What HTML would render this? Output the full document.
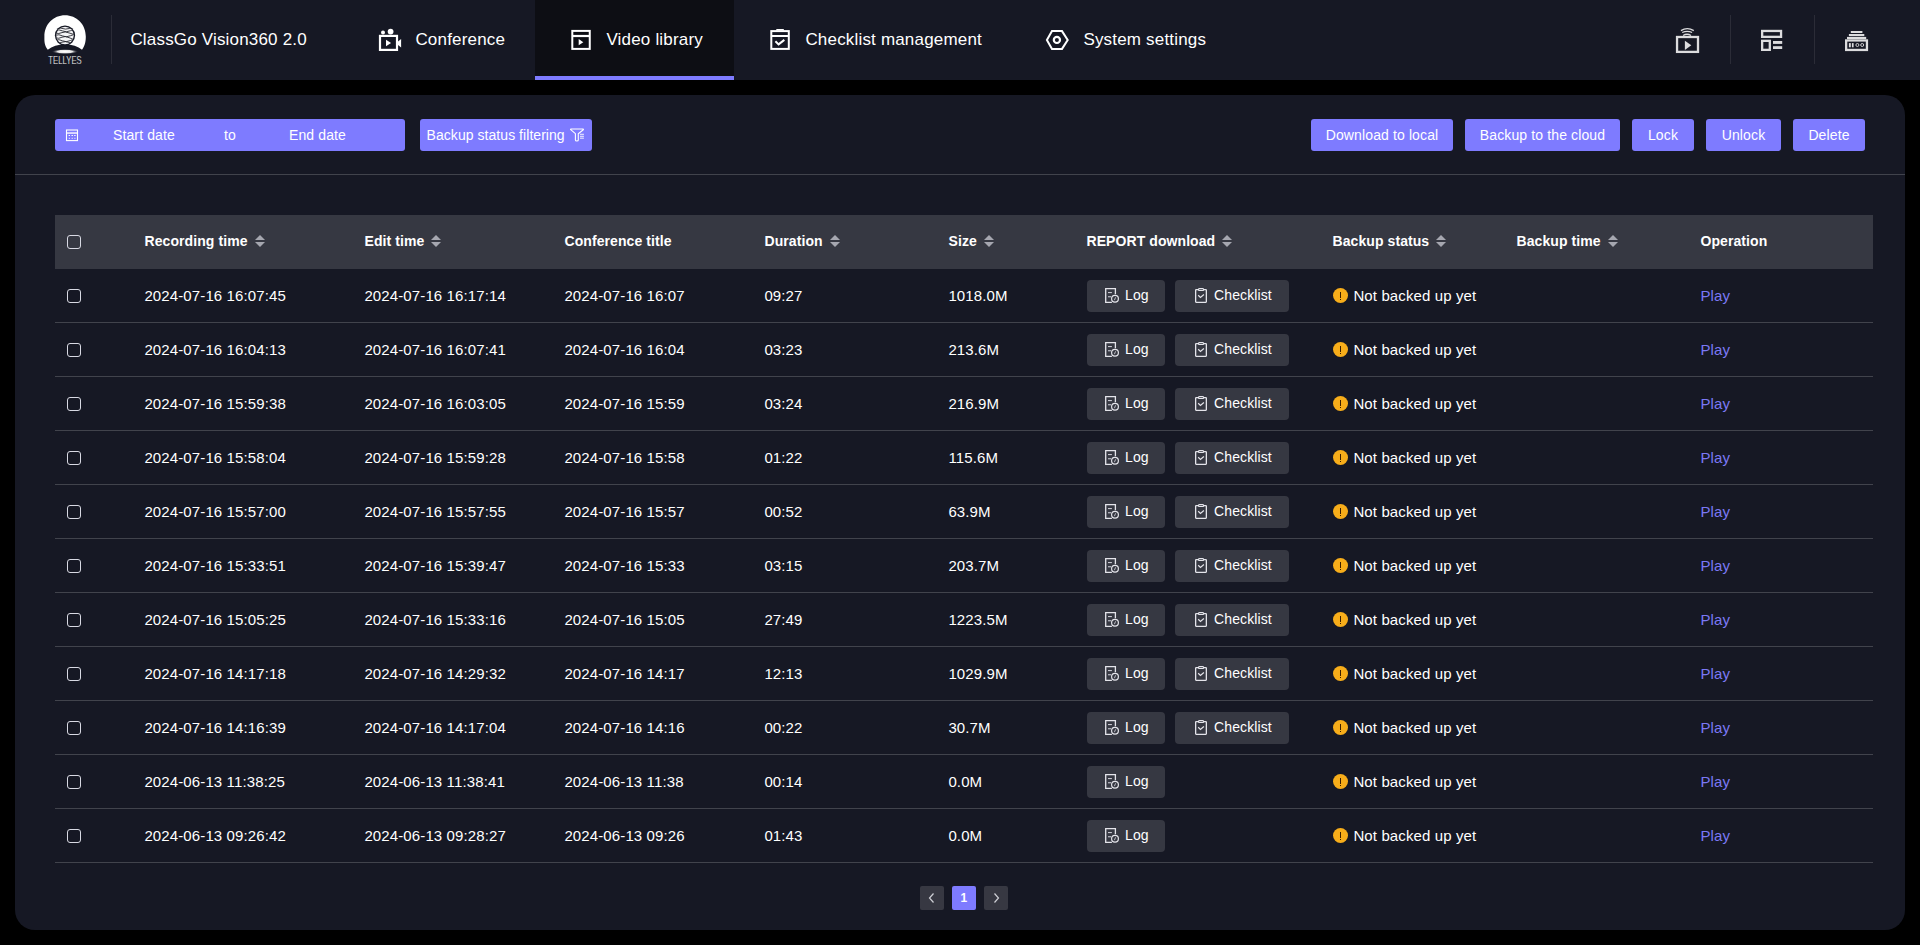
<!DOCTYPE html>
<html><head><meta charset="utf-8">
<style>
*{box-sizing:border-box;margin:0;padding:0}
html,body{width:1920px;height:945px;overflow:hidden;background:#000;font-family:"Liberation Sans",sans-serif;color:#fff;letter-spacing:0.12px}
.abs{position:absolute}
#hdr{position:absolute;left:0;top:0;width:1920px;height:80px;background:#161824}
.navt{position:absolute;top:1px;height:80px;line-height:78px;font-size:17px;color:#fff;white-space:nowrap;letter-spacing:0.18px;margin-left:-0.6px}
.vsep{position:absolute;width:1px;background:#2b2c37}
#panel{position:absolute;left:15px;top:95px;width:1890px;height:835px;background:#161824;border-radius:20px}
.btn{position:absolute;top:119px;height:32px;background:#7e7bff;border-radius:3px;font-size:14px;line-height:32px;color:#fff;text-align:center;white-space:nowrap}
#divider{position:absolute;left:15px;top:174px;width:1890px;height:1px;background:#41434c}
#thead{position:absolute;left:55px;top:215px;width:1818px;height:54px;background:#363842}
.th{position:absolute;top:215px;margin-left:-0.5px;letter-spacing:0.08px;height:54px;line-height:53px;font-size:14px;font-weight:700;color:#fff;white-space:nowrap}
.sort{display:inline-block;vertical-align:middle;margin-left:7px;margin-top:-3px}
.row{position:absolute;left:55px;width:1818px;height:54px;border-bottom:1px solid #41434c}
.td{position:absolute;top:0;margin-left:-0.6px;height:53px;line-height:53px;font-size:15px;color:#fff;white-space:nowrap}
.cb{position:absolute;left:12px;width:14px;height:14px;border:1.3px solid #d8d9e3;border-radius:3px}
.sbtn{position:absolute;top:11px;height:32px;background:#363842;border-radius:4px;font-size:14px;line-height:30px;color:#fff;white-space:nowrap}
.sbtn svg{position:absolute;top:2px}
.dot{position:absolute;left:1278px;top:19px;width:15px;height:15px;border-radius:50%;background:#f7ad1a}
.dot:after{content:"";position:absolute;left:7px;top:3.5px;width:1.2px;height:6.5px;background:#3a1d00}
.dot:before{content:"";position:absolute;left:7px;top:11px;width:1.2px;height:1.2px;background:#3a1d00}
.play{color:#7b78f5}
.pg{position:absolute;top:886px;width:24px;height:24px;border-radius:2px;background:#373842;font-size:12px;font-weight:700;text-align:center;line-height:24px}
</style></head>
<body>
<div id="hdr">
  <!-- logo -->
  <svg class="abs" style="left:36px;top:10px" width="60" height="60" viewBox="0 0 60 60">
    <defs>
      <radialGradient id="glow" cx="50%" cy="50%" r="50%">
        <stop offset="0%" stop-color="#fff"/><stop offset="55%" stop-color="#e8e8e8"/><stop offset="100%" stop-color="#161824" stop-opacity="0"/>
      </radialGradient>
      <clipPath id="sph"><circle cx="29" cy="25.5" r="8.7"/></clipPath>
    </defs>
    <path d="M11.8 39.8 C8 35 8.4 30 8.4 26.5 C8.4 14 17.5 5.2 29 5.2 C40.5 5.2 49.8 14 49.8 26.5 C49.8 30 49.5 35 46 39.8 C42 36.4 36 34.6 29 34.6 C22 34.6 16 36.4 11.8 39.8 Z" fill="#fff"/>
    <circle cx="29" cy="25.5" r="10.1" fill="#161824"/>
    <circle cx="29" cy="25.5" r="8.7" fill="#f4f4f6"/>
    <g clip-path="url(#sph)" stroke="#1e1f27" stroke-width="0.85" fill="none">
      <path d="M19 18.2 q4 -1.2 7 0.2 t8 0 t6 -0.5"/>
      <path d="M19 20.6 q4 -1.6 7.5 0.3 t8 -0.2 t6 0.3"/>
      <path d="M19 23 q4 1.2 7 -0.4 t8 0.6 t6 -0.6"/>
      <path d="M19 25.4 q4 -1.5 7.5 0.5 t8 -0.2 t6 -0.4"/>
      <path d="M19 27.8 q4 1.2 7 -0.6 t8 0.8 t6 -0.3"/>
      <path d="M19 30.2 q4 -1.3 7.5 0.6 t8 -0.3 t6 0.2"/>
      <path d="M19 32.6 q4 1 7 -0.4 t8 0.5 t6 -0.3"/>
    </g>
    <ellipse cx="29" cy="41.6" rx="13.5" ry="2.6" fill="url(#glow)"/>
    <text x="29" y="53.5" font-family="Liberation Sans" font-size="10.3" fill="#f0f0f0" stroke="#161824" stroke-width="0.15" text-anchor="middle" textLength="33.5" lengthAdjust="spacingAndGlyphs">TELLYES</text>
  </svg>
  <div class="vsep" style="left:111px;top:15px;height:49px"></div>
  <div class="navt" style="left:131px">ClassGo Vision360 2.0</div>

  <!-- Conference -->
  <svg class="abs" style="left:372px;top:24px" width="36" height="32" viewBox="0 0 36 32" fill="#fff">
    <circle cx="11" cy="8.5" r="2"/><circle cx="18.6" cy="7.6" r="2.9"/>
    <rect x="8" y="11.9" width="17" height="14" fill="none" stroke="#fff" stroke-width="2.2"/>
    <polygon points="14,15.7 19.1,19 14,22.2"/>
    <polygon points="26,17.5 29.1,14.9 29.1,23.4 26,21"/>
  </svg>
  <div class="navt" style="left:416px">Conference</div>

  <!-- Video library active -->
  <div class="abs" style="left:535px;top:0;width:199px;height:80px;background:#0d0e14"></div>
  <div class="abs" style="left:535px;top:76px;width:199px;height:4px;background:#7e7bff"></div>
  <svg class="abs" style="left:564px;top:24px" width="34" height="32" viewBox="0 0 34 32" fill="#fff">
    <rect x="8.3" y="6.9" width="17.45" height="18" fill="none" stroke="#fff" stroke-width="2"/>
    <rect x="8.3" y="10.9" width="17.45" height="2.2"/>
    <polygon points="14.7,15.1 19.3,18.15 14.7,21.2"/>
  </svg>
  <div class="navt" style="left:607px">Video library</div>

  <!-- Checklist management -->
  <svg class="abs" style="left:762px;top:24px" width="34" height="32" viewBox="0 0 34 32" fill="#fff">
    <rect x="9.3" y="7.1" width="17.5" height="17.8" fill="none" stroke="#fff" stroke-width="2"/>
    <polygon points="13.9,6.5 14.5,5.1 21.6,5.1 22.2,6.5"/>
    <rect x="9.3" y="11" width="17.5" height="2"/>
    <polyline points="13.4,17.3 16.6,20.4 22.35,15.9" fill="none" stroke="#fff" stroke-width="2"/>
  </svg>
  <div class="navt" style="left:806px">Checklist management</div>

  <!-- System settings -->
  <svg class="abs" style="left:1040px;top:24px" width="34" height="32" viewBox="0 0 34 32">
    <polygon points="6.9,16 12,7.1 22,7.1 27.7,16 22,24.9 12,24.9" fill="none" stroke="#fff" stroke-width="2"/>
    <circle cx="16.9" cy="15.9" r="3.1" fill="none" stroke="#fff" stroke-width="2.2"/>
  </svg>
  <div class="navt" style="left:1084px">System settings</div>

  <!-- right icons -->
  <svg class="abs" style="left:1670px;top:22px" width="36" height="36" viewBox="0 0 36 36" fill="#dcdcde">
    <rect x="7.05" y="15" width="20.95" height="14.9" fill="none" stroke="#dcdcde" stroke-width="2.3"/>
    <polygon points="14.9,18.7 21.3,23.35 14.9,28"/>
    <path d="M10.9 8.6 Q17.35 4.8 23.8 8.6" fill="none" stroke="#dcdcde" stroke-width="1.3"/>
    <path d="M12.2 10.5 Q17.15 8.1 22.1 10.5" fill="none" stroke="#dcdcde" stroke-width="1.3"/>
    <path d="M13.1 13.5 Q17.05 11 21 13.5" fill="none" stroke="#dcdcde" stroke-width="1.3"/>
  </svg>
  <div class="vsep" style="left:1730px;top:15px;height:49px"></div>
  <svg class="abs" style="left:1754px;top:22px" width="36" height="36" viewBox="0 0 36 36" fill="#dcdcde">
    <rect x="8.15" y="8.95" width="18.9" height="5.9" fill="none" stroke="#dcdcde" stroke-width="2.3"/>
    <rect x="8.15" y="18.85" width="7.65" height="9" fill="none" stroke="#dcdcde" stroke-width="2.3"/>
    <rect x="19" y="19" width="9.2" height="2.9"/>
    <rect x="19" y="24.2" width="9.2" height="2.8"/>
  </svg>
  <div class="vsep" style="left:1814px;top:15px;height:49px"></div>
  <svg class="abs" style="left:1838px;top:22px" width="36" height="36" viewBox="0 0 36 36" fill="#dcdcde">
    <rect x="12.8" y="9" width="11.6" height="2"/>
    <rect x="10.9" y="12" width="15.4" height="2.1"/>
    <rect x="9" y="14.9" width="19.2" height="2.2"/>
    <rect x="8.15" y="18.45" width="20.8" height="9.5" fill="none" stroke="#dcdcde" stroke-width="2.3"/>
    <rect x="10.9" y="21.1" width="1.9" height="4.2"/>
    <rect x="13.9" y="21.1" width="1.7" height="4.2"/>
    <circle cx="19.4" cy="23" r="1.5" fill="none" stroke="#dcdcde" stroke-width="0.9"/>
    <circle cx="24.2" cy="23" r="1.5" fill="none" stroke="#dcdcde" stroke-width="0.9"/>
  </svg>
</div>

<div id="panel"></div>

<!-- toolbar -->
<div class="btn" style="left:55px;width:350px;text-align:left">
  <svg class="abs" style="left:1px;top:0" width="40" height="32" viewBox="0 0 40 32">
    <rect x="10.5" y="11" width="11" height="10.6" fill="none" stroke="#fff" stroke-width="1.1"/>
    <rect x="11" y="13.1" width="10" height="1.9" fill="#dcdaff"/>
    <g fill="#fff"><rect x="12.6" y="16" width="1.4" height="1"/><rect x="15.5" y="16" width="1.4" height="1"/><rect x="18.2" y="16" width="1.4" height="1"/>
    <rect x="12.8" y="18.8" width="1" height="1"/><rect x="15.7" y="18.8" width="1" height="1"/><rect x="18.4" y="18.8" width="1" height="1"/></g>
  </svg>
  <span class="abs" style="left:58px">Start date</span>
  <span class="abs" style="left:169px">to</span>
  <span class="abs" style="left:234px">End date</span>
</div>
<div class="btn" style="left:420px;width:172px;text-align:left">
  <span class="abs" style="left:6.6px;letter-spacing:0.05px">Backup status filtering</span>
  <svg class="abs" style="left:135px;top:0" width="40" height="32" viewBox="0 0 40 32">
    <g transform="translate(0 0.7)">
    <path d="M16 9.3 H28 Q28.8 9.4 28.3 10 L23.3 14 V20.3 Q23.3 21.3 21.85 21.3 Q20.4 21.3 20.4 20.3 V14 L15.7 10 Q15.2 9.4 16 9.3 Z" fill="none" stroke="#fff" stroke-width="1.1" stroke-linejoin="round"/>
    <g fill="#fff"><rect x="25" y="14.1" width="3.9" height="0.9"/><rect x="25" y="16.1" width="3.9" height="0.9"/><rect x="25" y="18" width="3.9" height="0.9"/></g>
    </g>
  </svg>
</div>

<div class="btn" style="left:1311px;width:142px">Download to local</div>
<div class="btn" style="left:1465px;width:155px">Backup to the cloud</div>
<div class="btn" style="left:1632px;width:62px">Lock</div>
<div class="btn" style="left:1706px;width:75px">Unlock</div>
<div class="btn" style="left:1793px;width:72px">Delete</div>

<div id="divider"></div>

<!-- table header -->
<div id="thead"></div>
<div class="abs" style="left:67px;top:235px;width:14px;height:14px;border:1.3px solid #d8d9e3;border-radius:3px"></div>
<div class="th" style="left:145px">Recording time<svg class="sort" width="10" height="12" viewBox="0 0 10 12"><polygon points="5,0 10,5 0,5" fill="#a6a7b0"/><polygon points="0,7 10,7 5,12" fill="#a6a7b0"/></svg></div>
<div class="th" style="left:365px">Edit time<svg class="sort" width="10" height="12" viewBox="0 0 10 12"><polygon points="5,0 10,5 0,5" fill="#a6a7b0"/><polygon points="0,7 10,7 5,12" fill="#a6a7b0"/></svg></div>
<div class="th" style="left:565px">Conference title</div>
<div class="th" style="left:765px">Duration<svg class="sort" width="10" height="12" viewBox="0 0 10 12"><polygon points="5,0 10,5 0,5" fill="#a6a7b0"/><polygon points="0,7 10,7 5,12" fill="#a6a7b0"/></svg></div>
<div class="th" style="left:949px">Size<svg class="sort" width="10" height="12" viewBox="0 0 10 12"><polygon points="5,0 10,5 0,5" fill="#a6a7b0"/><polygon points="0,7 10,7 5,12" fill="#a6a7b0"/></svg></div>
<div class="th" style="left:1087px">REPORT download<svg class="sort" width="10" height="12" viewBox="0 0 10 12"><polygon points="5,0 10,5 0,5" fill="#a6a7b0"/><polygon points="0,7 10,7 5,12" fill="#a6a7b0"/></svg></div>
<div class="th" style="left:1333px">Backup status<svg class="sort" width="10" height="12" viewBox="0 0 10 12"><polygon points="5,0 10,5 0,5" fill="#a6a7b0"/><polygon points="0,7 10,7 5,12" fill="#a6a7b0"/></svg></div>
<div class="th" style="left:1517px">Backup time<svg class="sort" width="10" height="12" viewBox="0 0 10 12"><polygon points="5,0 10,5 0,5" fill="#a6a7b0"/><polygon points="0,7 10,7 5,12" fill="#a6a7b0"/></svg></div>
<div class="th" style="left:1701px">Operation</div>

<div id="rows"><div class="row" style="top:269px"><div class="cb" style="top:20px"></div><div class="td" style="left:90px">2024-07-16 16:07:45</div><div class="td" style="left:310px">2024-07-16 16:17:14</div><div class="td" style="left:510px">2024-07-16 16:07</div><div class="td" style="left:710px">09:27</div><div class="td" style="left:894px">1018.0M</div><div class="sbtn" style="left:1032px;width:78px"><svg style="left:11px" width="30" height="32" viewBox="0 0 30 32"><path d="M13.9 20.3 H7.7 V6.6 H17.4 V12.2" fill="none" stroke="#e4e4ea" stroke-width="1.3"/><rect x="10" y="10" width="3.9" height="1.1" fill="#c8c8d0"/><rect x="10" y="14.2" width="3" height="1.1" fill="#c8c8d0"/><circle cx="17" cy="16.75" r="3.4" fill="none" stroke="#e4e4ea" stroke-width="1.2"/><path d="M16.4 18.2 L17.6 15.3" stroke="#c8c8d0" stroke-width="0.9"/></svg><span class="abs" style="left:38px">Log</span></div><div class="sbtn" style="left:1120px;width:114px"><svg style="left:13px" width="30" height="32" viewBox="0 0 30 32"><rect x="7.65" y="7.7" width="10.7" height="12.65" rx="0.5" fill="none" stroke="#e4e4ea" stroke-width="1.3"/><rect x="10.4" y="6.6" width="5.3" height="1.9" rx="0.95" fill="#363842" stroke="#e4e4ea" stroke-width="1.2"/><polyline points="10.2,13.3 12.45,15.5 15.9,12.5" fill="none" stroke="#e4e4ea" stroke-width="1.2"/></svg><span class="abs" style="left:39px">Checklist</span></div><div class="dot"></div><div class="td" style="left:1299px">Not backed up yet</div><div class="td play" style="left:1646px">Play</div></div>
<div class="row" style="top:323px"><div class="cb" style="top:20px"></div><div class="td" style="left:90px">2024-07-16 16:04:13</div><div class="td" style="left:310px">2024-07-16 16:07:41</div><div class="td" style="left:510px">2024-07-16 16:04</div><div class="td" style="left:710px">03:23</div><div class="td" style="left:894px">213.6M</div><div class="sbtn" style="left:1032px;width:78px"><svg style="left:11px" width="30" height="32" viewBox="0 0 30 32"><path d="M13.9 20.3 H7.7 V6.6 H17.4 V12.2" fill="none" stroke="#e4e4ea" stroke-width="1.3"/><rect x="10" y="10" width="3.9" height="1.1" fill="#c8c8d0"/><rect x="10" y="14.2" width="3" height="1.1" fill="#c8c8d0"/><circle cx="17" cy="16.75" r="3.4" fill="none" stroke="#e4e4ea" stroke-width="1.2"/><path d="M16.4 18.2 L17.6 15.3" stroke="#c8c8d0" stroke-width="0.9"/></svg><span class="abs" style="left:38px">Log</span></div><div class="sbtn" style="left:1120px;width:114px"><svg style="left:13px" width="30" height="32" viewBox="0 0 30 32"><rect x="7.65" y="7.7" width="10.7" height="12.65" rx="0.5" fill="none" stroke="#e4e4ea" stroke-width="1.3"/><rect x="10.4" y="6.6" width="5.3" height="1.9" rx="0.95" fill="#363842" stroke="#e4e4ea" stroke-width="1.2"/><polyline points="10.2,13.3 12.45,15.5 15.9,12.5" fill="none" stroke="#e4e4ea" stroke-width="1.2"/></svg><span class="abs" style="left:39px">Checklist</span></div><div class="dot"></div><div class="td" style="left:1299px">Not backed up yet</div><div class="td play" style="left:1646px">Play</div></div>
<div class="row" style="top:377px"><div class="cb" style="top:20px"></div><div class="td" style="left:90px">2024-07-16 15:59:38</div><div class="td" style="left:310px">2024-07-16 16:03:05</div><div class="td" style="left:510px">2024-07-16 15:59</div><div class="td" style="left:710px">03:24</div><div class="td" style="left:894px">216.9M</div><div class="sbtn" style="left:1032px;width:78px"><svg style="left:11px" width="30" height="32" viewBox="0 0 30 32"><path d="M13.9 20.3 H7.7 V6.6 H17.4 V12.2" fill="none" stroke="#e4e4ea" stroke-width="1.3"/><rect x="10" y="10" width="3.9" height="1.1" fill="#c8c8d0"/><rect x="10" y="14.2" width="3" height="1.1" fill="#c8c8d0"/><circle cx="17" cy="16.75" r="3.4" fill="none" stroke="#e4e4ea" stroke-width="1.2"/><path d="M16.4 18.2 L17.6 15.3" stroke="#c8c8d0" stroke-width="0.9"/></svg><span class="abs" style="left:38px">Log</span></div><div class="sbtn" style="left:1120px;width:114px"><svg style="left:13px" width="30" height="32" viewBox="0 0 30 32"><rect x="7.65" y="7.7" width="10.7" height="12.65" rx="0.5" fill="none" stroke="#e4e4ea" stroke-width="1.3"/><rect x="10.4" y="6.6" width="5.3" height="1.9" rx="0.95" fill="#363842" stroke="#e4e4ea" stroke-width="1.2"/><polyline points="10.2,13.3 12.45,15.5 15.9,12.5" fill="none" stroke="#e4e4ea" stroke-width="1.2"/></svg><span class="abs" style="left:39px">Checklist</span></div><div class="dot"></div><div class="td" style="left:1299px">Not backed up yet</div><div class="td play" style="left:1646px">Play</div></div>
<div class="row" style="top:431px"><div class="cb" style="top:20px"></div><div class="td" style="left:90px">2024-07-16 15:58:04</div><div class="td" style="left:310px">2024-07-16 15:59:28</div><div class="td" style="left:510px">2024-07-16 15:58</div><div class="td" style="left:710px">01:22</div><div class="td" style="left:894px">115.6M</div><div class="sbtn" style="left:1032px;width:78px"><svg style="left:11px" width="30" height="32" viewBox="0 0 30 32"><path d="M13.9 20.3 H7.7 V6.6 H17.4 V12.2" fill="none" stroke="#e4e4ea" stroke-width="1.3"/><rect x="10" y="10" width="3.9" height="1.1" fill="#c8c8d0"/><rect x="10" y="14.2" width="3" height="1.1" fill="#c8c8d0"/><circle cx="17" cy="16.75" r="3.4" fill="none" stroke="#e4e4ea" stroke-width="1.2"/><path d="M16.4 18.2 L17.6 15.3" stroke="#c8c8d0" stroke-width="0.9"/></svg><span class="abs" style="left:38px">Log</span></div><div class="sbtn" style="left:1120px;width:114px"><svg style="left:13px" width="30" height="32" viewBox="0 0 30 32"><rect x="7.65" y="7.7" width="10.7" height="12.65" rx="0.5" fill="none" stroke="#e4e4ea" stroke-width="1.3"/><rect x="10.4" y="6.6" width="5.3" height="1.9" rx="0.95" fill="#363842" stroke="#e4e4ea" stroke-width="1.2"/><polyline points="10.2,13.3 12.45,15.5 15.9,12.5" fill="none" stroke="#e4e4ea" stroke-width="1.2"/></svg><span class="abs" style="left:39px">Checklist</span></div><div class="dot"></div><div class="td" style="left:1299px">Not backed up yet</div><div class="td play" style="left:1646px">Play</div></div>
<div class="row" style="top:485px"><div class="cb" style="top:20px"></div><div class="td" style="left:90px">2024-07-16 15:57:00</div><div class="td" style="left:310px">2024-07-16 15:57:55</div><div class="td" style="left:510px">2024-07-16 15:57</div><div class="td" style="left:710px">00:52</div><div class="td" style="left:894px">63.9M</div><div class="sbtn" style="left:1032px;width:78px"><svg style="left:11px" width="30" height="32" viewBox="0 0 30 32"><path d="M13.9 20.3 H7.7 V6.6 H17.4 V12.2" fill="none" stroke="#e4e4ea" stroke-width="1.3"/><rect x="10" y="10" width="3.9" height="1.1" fill="#c8c8d0"/><rect x="10" y="14.2" width="3" height="1.1" fill="#c8c8d0"/><circle cx="17" cy="16.75" r="3.4" fill="none" stroke="#e4e4ea" stroke-width="1.2"/><path d="M16.4 18.2 L17.6 15.3" stroke="#c8c8d0" stroke-width="0.9"/></svg><span class="abs" style="left:38px">Log</span></div><div class="sbtn" style="left:1120px;width:114px"><svg style="left:13px" width="30" height="32" viewBox="0 0 30 32"><rect x="7.65" y="7.7" width="10.7" height="12.65" rx="0.5" fill="none" stroke="#e4e4ea" stroke-width="1.3"/><rect x="10.4" y="6.6" width="5.3" height="1.9" rx="0.95" fill="#363842" stroke="#e4e4ea" stroke-width="1.2"/><polyline points="10.2,13.3 12.45,15.5 15.9,12.5" fill="none" stroke="#e4e4ea" stroke-width="1.2"/></svg><span class="abs" style="left:39px">Checklist</span></div><div class="dot"></div><div class="td" style="left:1299px">Not backed up yet</div><div class="td play" style="left:1646px">Play</div></div>
<div class="row" style="top:539px"><div class="cb" style="top:20px"></div><div class="td" style="left:90px">2024-07-16 15:33:51</div><div class="td" style="left:310px">2024-07-16 15:39:47</div><div class="td" style="left:510px">2024-07-16 15:33</div><div class="td" style="left:710px">03:15</div><div class="td" style="left:894px">203.7M</div><div class="sbtn" style="left:1032px;width:78px"><svg style="left:11px" width="30" height="32" viewBox="0 0 30 32"><path d="M13.9 20.3 H7.7 V6.6 H17.4 V12.2" fill="none" stroke="#e4e4ea" stroke-width="1.3"/><rect x="10" y="10" width="3.9" height="1.1" fill="#c8c8d0"/><rect x="10" y="14.2" width="3" height="1.1" fill="#c8c8d0"/><circle cx="17" cy="16.75" r="3.4" fill="none" stroke="#e4e4ea" stroke-width="1.2"/><path d="M16.4 18.2 L17.6 15.3" stroke="#c8c8d0" stroke-width="0.9"/></svg><span class="abs" style="left:38px">Log</span></div><div class="sbtn" style="left:1120px;width:114px"><svg style="left:13px" width="30" height="32" viewBox="0 0 30 32"><rect x="7.65" y="7.7" width="10.7" height="12.65" rx="0.5" fill="none" stroke="#e4e4ea" stroke-width="1.3"/><rect x="10.4" y="6.6" width="5.3" height="1.9" rx="0.95" fill="#363842" stroke="#e4e4ea" stroke-width="1.2"/><polyline points="10.2,13.3 12.45,15.5 15.9,12.5" fill="none" stroke="#e4e4ea" stroke-width="1.2"/></svg><span class="abs" style="left:39px">Checklist</span></div><div class="dot"></div><div class="td" style="left:1299px">Not backed up yet</div><div class="td play" style="left:1646px">Play</div></div>
<div class="row" style="top:593px"><div class="cb" style="top:20px"></div><div class="td" style="left:90px">2024-07-16 15:05:25</div><div class="td" style="left:310px">2024-07-16 15:33:16</div><div class="td" style="left:510px">2024-07-16 15:05</div><div class="td" style="left:710px">27:49</div><div class="td" style="left:894px">1223.5M</div><div class="sbtn" style="left:1032px;width:78px"><svg style="left:11px" width="30" height="32" viewBox="0 0 30 32"><path d="M13.9 20.3 H7.7 V6.6 H17.4 V12.2" fill="none" stroke="#e4e4ea" stroke-width="1.3"/><rect x="10" y="10" width="3.9" height="1.1" fill="#c8c8d0"/><rect x="10" y="14.2" width="3" height="1.1" fill="#c8c8d0"/><circle cx="17" cy="16.75" r="3.4" fill="none" stroke="#e4e4ea" stroke-width="1.2"/><path d="M16.4 18.2 L17.6 15.3" stroke="#c8c8d0" stroke-width="0.9"/></svg><span class="abs" style="left:38px">Log</span></div><div class="sbtn" style="left:1120px;width:114px"><svg style="left:13px" width="30" height="32" viewBox="0 0 30 32"><rect x="7.65" y="7.7" width="10.7" height="12.65" rx="0.5" fill="none" stroke="#e4e4ea" stroke-width="1.3"/><rect x="10.4" y="6.6" width="5.3" height="1.9" rx="0.95" fill="#363842" stroke="#e4e4ea" stroke-width="1.2"/><polyline points="10.2,13.3 12.45,15.5 15.9,12.5" fill="none" stroke="#e4e4ea" stroke-width="1.2"/></svg><span class="abs" style="left:39px">Checklist</span></div><div class="dot"></div><div class="td" style="left:1299px">Not backed up yet</div><div class="td play" style="left:1646px">Play</div></div>
<div class="row" style="top:647px"><div class="cb" style="top:20px"></div><div class="td" style="left:90px">2024-07-16 14:17:18</div><div class="td" style="left:310px">2024-07-16 14:29:32</div><div class="td" style="left:510px">2024-07-16 14:17</div><div class="td" style="left:710px">12:13</div><div class="td" style="left:894px">1029.9M</div><div class="sbtn" style="left:1032px;width:78px"><svg style="left:11px" width="30" height="32" viewBox="0 0 30 32"><path d="M13.9 20.3 H7.7 V6.6 H17.4 V12.2" fill="none" stroke="#e4e4ea" stroke-width="1.3"/><rect x="10" y="10" width="3.9" height="1.1" fill="#c8c8d0"/><rect x="10" y="14.2" width="3" height="1.1" fill="#c8c8d0"/><circle cx="17" cy="16.75" r="3.4" fill="none" stroke="#e4e4ea" stroke-width="1.2"/><path d="M16.4 18.2 L17.6 15.3" stroke="#c8c8d0" stroke-width="0.9"/></svg><span class="abs" style="left:38px">Log</span></div><div class="sbtn" style="left:1120px;width:114px"><svg style="left:13px" width="30" height="32" viewBox="0 0 30 32"><rect x="7.65" y="7.7" width="10.7" height="12.65" rx="0.5" fill="none" stroke="#e4e4ea" stroke-width="1.3"/><rect x="10.4" y="6.6" width="5.3" height="1.9" rx="0.95" fill="#363842" stroke="#e4e4ea" stroke-width="1.2"/><polyline points="10.2,13.3 12.45,15.5 15.9,12.5" fill="none" stroke="#e4e4ea" stroke-width="1.2"/></svg><span class="abs" style="left:39px">Checklist</span></div><div class="dot"></div><div class="td" style="left:1299px">Not backed up yet</div><div class="td play" style="left:1646px">Play</div></div>
<div class="row" style="top:701px"><div class="cb" style="top:20px"></div><div class="td" style="left:90px">2024-07-16 14:16:39</div><div class="td" style="left:310px">2024-07-16 14:17:04</div><div class="td" style="left:510px">2024-07-16 14:16</div><div class="td" style="left:710px">00:22</div><div class="td" style="left:894px">30.7M</div><div class="sbtn" style="left:1032px;width:78px"><svg style="left:11px" width="30" height="32" viewBox="0 0 30 32"><path d="M13.9 20.3 H7.7 V6.6 H17.4 V12.2" fill="none" stroke="#e4e4ea" stroke-width="1.3"/><rect x="10" y="10" width="3.9" height="1.1" fill="#c8c8d0"/><rect x="10" y="14.2" width="3" height="1.1" fill="#c8c8d0"/><circle cx="17" cy="16.75" r="3.4" fill="none" stroke="#e4e4ea" stroke-width="1.2"/><path d="M16.4 18.2 L17.6 15.3" stroke="#c8c8d0" stroke-width="0.9"/></svg><span class="abs" style="left:38px">Log</span></div><div class="sbtn" style="left:1120px;width:114px"><svg style="left:13px" width="30" height="32" viewBox="0 0 30 32"><rect x="7.65" y="7.7" width="10.7" height="12.65" rx="0.5" fill="none" stroke="#e4e4ea" stroke-width="1.3"/><rect x="10.4" y="6.6" width="5.3" height="1.9" rx="0.95" fill="#363842" stroke="#e4e4ea" stroke-width="1.2"/><polyline points="10.2,13.3 12.45,15.5 15.9,12.5" fill="none" stroke="#e4e4ea" stroke-width="1.2"/></svg><span class="abs" style="left:39px">Checklist</span></div><div class="dot"></div><div class="td" style="left:1299px">Not backed up yet</div><div class="td play" style="left:1646px">Play</div></div>
<div class="row" style="top:755px"><div class="cb" style="top:20px"></div><div class="td" style="left:90px">2024-06-13 11:38:25</div><div class="td" style="left:310px">2024-06-13 11:38:41</div><div class="td" style="left:510px">2024-06-13 11:38</div><div class="td" style="left:710px">00:14</div><div class="td" style="left:894px">0.0M</div><div class="sbtn" style="left:1032px;width:78px"><svg style="left:11px" width="30" height="32" viewBox="0 0 30 32"><path d="M13.9 20.3 H7.7 V6.6 H17.4 V12.2" fill="none" stroke="#e4e4ea" stroke-width="1.3"/><rect x="10" y="10" width="3.9" height="1.1" fill="#c8c8d0"/><rect x="10" y="14.2" width="3" height="1.1" fill="#c8c8d0"/><circle cx="17" cy="16.75" r="3.4" fill="none" stroke="#e4e4ea" stroke-width="1.2"/><path d="M16.4 18.2 L17.6 15.3" stroke="#c8c8d0" stroke-width="0.9"/></svg><span class="abs" style="left:38px">Log</span></div><div class="dot"></div><div class="td" style="left:1299px">Not backed up yet</div><div class="td play" style="left:1646px">Play</div></div>
<div class="row" style="top:809px"><div class="cb" style="top:20px"></div><div class="td" style="left:90px">2024-06-13 09:26:42</div><div class="td" style="left:310px">2024-06-13 09:28:27</div><div class="td" style="left:510px">2024-06-13 09:26</div><div class="td" style="left:710px">01:43</div><div class="td" style="left:894px">0.0M</div><div class="sbtn" style="left:1032px;width:78px"><svg style="left:11px" width="30" height="32" viewBox="0 0 30 32"><path d="M13.9 20.3 H7.7 V6.6 H17.4 V12.2" fill="none" stroke="#e4e4ea" stroke-width="1.3"/><rect x="10" y="10" width="3.9" height="1.1" fill="#c8c8d0"/><rect x="10" y="14.2" width="3" height="1.1" fill="#c8c8d0"/><circle cx="17" cy="16.75" r="3.4" fill="none" stroke="#e4e4ea" stroke-width="1.2"/><path d="M16.4 18.2 L17.6 15.3" stroke="#c8c8d0" stroke-width="0.9"/></svg><span class="abs" style="left:38px">Log</span></div><div class="dot"></div><div class="td" style="left:1299px">Not backed up yet</div><div class="td play" style="left:1646px">Play</div></div></div><!--/rows-->

<!-- pagination -->
<div class="pg" style="left:920px"><svg width="24" height="24" viewBox="0 0 24 24"><polyline points="13.5,7.5 9.5,12 13.5,16.5" fill="none" stroke="#cfd0d6" stroke-width="1.2"/></svg></div>
<div class="pg" style="left:952px;background:#7e7bff">1</div>
<div class="pg" style="left:984px"><svg width="24" height="24" viewBox="0 0 24 24"><polyline points="10.5,7.5 14.5,12 10.5,16.5" fill="none" stroke="#cfd0d6" stroke-width="1.2"/></svg></div>

</body></html>
